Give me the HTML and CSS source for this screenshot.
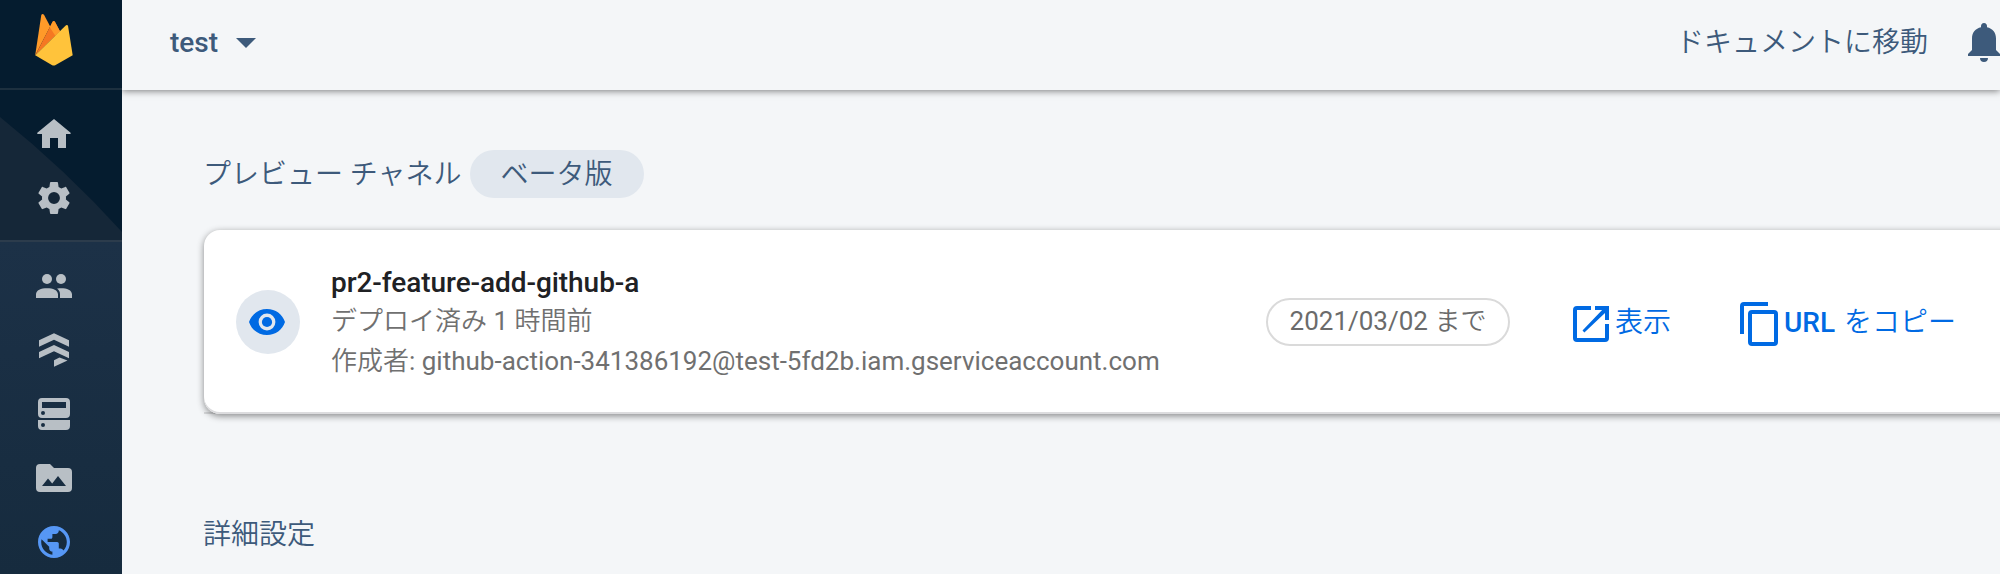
FILE: index.html
```html
<!DOCTYPE html>
<html lang="ja">
<head>
<meta charset="utf-8">
<title>test</title>
<link rel="stylesheet" href="styles.css">
</head>
<body>
<div class="app">
  <nav class="sidebar">
    <a class="brand">
      <svg width="38" height="52" viewBox="0 0 38 52">
        <path fill="#ff9a29" d="M.2 41.2 6.3 1.1Q7.2-.9 9 .8L15.2 12.500 0.300 41.200z"/>
        <path fill="#f57722" d="M.3 41.200 17.600 7.700Q18.700 6.200 19.900 7.700L25 17.200z"/>
        <path fill="#ff9a29" d="M14.800 13.200 17.600 7.700Q18.700 6.200 19.900 7.700L25 17.200 20.300 21.800z"/>
        <path fill="#ffc33b" d="M.2 41.300 31 11.300Q32.200 10.400 33 11.800L37.700 41.200 20.200 51.200Q18.700 52 17.200 51.200z"/>
      </svg>
    </a>
    <div class="nav-group nav-top">
      <svg class="top-shade" width="122" height="150" viewBox="0 0 122 150"><path d="M0 27Q66 80 122 142V150H0z"/></svg>
      <a class="nav-item"><svg width="40" height="40" viewBox="0 0 40 40"><path d="M20 5 3.300 18.800V20H8V34H16V24H24V34H32V20H36.600V18.800z"/></svg></a>
      <a class="nav-item"><svg width="40" height="40" viewBox="0.500 -0.500 25 25"><path transform="translate(1 0)" d="M19.430 12.980c.04-.32.07-.64.07-.98s-.03-.66-.07-.98l2.110-1.650c.19-.15.24-.42.12-.64l-2-3.460c-.12-.22-.39-.3-.61-.22l-2.490 1c-.52-.4-1.080-.73-1.690-.98l-.38-2.650C14.460 2.180 14.250 2 14 2h-4c-.25 0-.46.18-.49.42l-.38 2.650c-.61.25-1.170.59-1.690.98l-2.490-1c-.23-.09-.49 0-.61.22l-2 3.460c-.13.22-.07.49.12.64l2.110 1.650c-.04.32-.07.65-.07.98s.03.66.07.98l-2.110 1.650c-.19.15-.24.42-.12.64l2 3.460c.12.22.39.3.61.22l2.490-1c.52.4 1.080.73 1.690.98l.38 2.650c.03.24.24.42.49.42h4c.25 0 .46-.18.49-.42l.38-2.650c.61-.25 1.170-.59 1.690-.98l2.490 1c.23.09.49 0 .61-.22l2-3.460c.12-.22.07-.49-.12-.64l-2.110-1.650zM12 15.700A3.700 3.700 0 1 1 12 8.300A3.700 3.700 0 0 1 12 15.700z"/></svg></a>
    </div>
    <div class="nav-group nav-main">
      <a class="nav-item"><svg width="40" height="40" viewBox="0 0 40 40"><circle cx="13" cy="13" r="5"/><circle cx="27" cy="13" r="5"/><path d="M2 32V28.500C2 24 7 22.200 13 22.200S24 24 24 28.500V32zM23 22.600C24.500 22.200 25.500 22.200 27 22.200C33 22.200 38 24 38 28.500V32H26V28.500C26 26 25 24 23 22.600z"/></svg></a>
      <a class="nav-item"><svg width="40" height="40" viewBox="0 0 40 40"><path d="M20 3.300 35 10.300V16.700L20 9.700 5 16.700V10.300zM20 15 35 22V28.300L20 21.300 5 28.300V22zM20 30.200 25.500 27.500 33.500 30.600 20 36.700z"/></svg></a>
      <a class="nav-item"><svg width="40" height="40" viewBox="0 0 40 40"><path fill-rule="evenodd" d="M8 4H32Q36 4 36 8V20Q36 24 32 24H8Q4 24 4 20V8Q4 4 8 4zM8 8V14H32V8zM9 17A2 2 0 1 0 9 21A2 2 0 0 0 9 17zM4 26H36V32Q36 36 32 36H8Q4 36 4 32zM9 29A2 2 0 1 0 9 33A2 2 0 0 0 9 29z"/></svg></a>
      <a class="nav-item"><svg width="40" height="40" viewBox="0 0 40 40"><path fill-rule="evenodd" d="M6 6H16L20 10H34Q38 10 38 14V30Q38 34 34 34H6Q2 34 2 30V10Q2 6 6 6zM8 28H32L24 18 18.200 25.500 14 20.500z"/></svg></a>
      <a class="nav-item active"><svg width="40" height="40" viewBox="-0.500 -0.500 25 25"><path d="M12 2C6.480 2 2 6.480 2 12s4.480 10 10 10 10-4.480 10-10S17.520 2 12 2zm-1 17.930c-3.950-.49-7-3.850-7-7.930 0-.62.08-1.210.21-1.790L9 15v1c0 1.100.9 2 2 2v1.930zm6.900-2.540c-.26-.81-1-1.390-1.900-1.390h-1v-3c0-.55-.45-1-1-1H8v-2h2c.55 0 1-.45 1-1V7h2c1.100 0 2-.9 2-2v-.41c2.930 1.190 5 4.060 5 7.410 0 2.080-.8 3.970-2.100 5.390z"/></svg></a>
    </div>
  </nav>
  <div class="content">
    <header class="topbar">
      <div class="project"><span>test</span><svg width="20" height="10" viewBox="0 0 20 10"><path d="M0 0H20L10 10z"/></svg></div>
      <a class="docs-link">ドキュメントに移動</a>
      <svg class="bell" width="32" height="39" viewBox="0 0 32 39"><path d="M16 0C18 0 19 1.500 19 3V4.300C24.500 5.500 28 9.500 28 15.500V27L32 31V33H0V31L4 27V15.500C4 9.500 7.500 5.500 13 4.300V3C13 1.500 14 0 16 0zM12 35H20C20 37.500 18.500 39 16 39S12 37.500 12 35z"/></svg>
    </header>
    <main class="page">
      <div class="heading-row"><h2>プレビュー チャネル</h2><span class="beta">ベータ版</span></div>
      <div class="card-wrap">
        <section class="card">
          <div class="avatar"><svg width="36" height="26" viewBox="0 0 36 26"><path fill-rule="evenodd" d="M18 0C9.500 0 2.500 5.200 0 13C2.500 20.800 9.500 26 18 26S33.500 20.800 36 13C33.500 5.200 26.500 0 18 0zM18 4.600A8.400 8.400 0 1 1 18 21.400A8.400 8.400 0 0 1 18 4.600z"/><circle cx="18" cy="13" r="5.100"/></svg></div>
          <div class="details">
            <div class="channel">pr2-feature-add-github-a</div>
            <div class="meta">デプロイ済み<span class="latin"> 1 </span>時間前</div>
            <div class="meta author">作成者<span class="latin">: github-action-341386192@test-5fd2b.iam.gserviceaccount.com</span></div>
          </div>
          <span class="expiry"><span class="latin">2021/03/02 </span>まで</span>
          <a class="action view"><svg width="36" height="36" viewBox="0 0 36 36"><path d="M4 0H18V4H4V32H32V18H36V32Q36 36 32 36H4Q0 36 0 32V4Q0 0 4 0zM22 0H36V14H32V6.900L11.400 26.500 9.500 24.600 29.100 4H22z"/></svg><span>表示</span></a>
          <a class="action copy"><svg width="38" height="44" viewBox="0 0 38 44"><path fill-rule="evenodd" d="M4 0H28V4H4V32H0V4Q0 0 4 0zM12 8H34Q38 8 38 12V40Q38 44 34 44H12Q8 44 8 40V12Q8 8 12 8zM12 12V40H34V12z"/></svg><span><b>URL</b> をコピー</span></a>
        </section>
      </div>
      <h2 class="advanced">詳細設定</h2>
    </main>
  </div>
</div>
</body>
</html>
```
FILE: styles.css
```css
* { box-sizing: border-box; }
body { margin: 0; font-family: Roboto, "Noto Sans CJK JP", sans-serif; font-weight: 350; background: #f4f6f8; color: #3d5a7b; }
svg { display: block; flex: none; fill: currentColor; }
.app { display: flex; width: 2000px; height: 574px; overflow: hidden; }
.sidebar { flex: none; width: 122px; background: #051c2f; color: #b8bfc5; }
.brand { display: flex; height: 90px; padding: 14px 0 0 35px; border-bottom: 2px solid #1d303f; }
.nav-group { display: flex; flex-direction: column; }
.nav-top { position: relative; height: 152px; padding-top: 12px; border-bottom: 2px solid #2c3c4c; }
.top-shade { position: absolute; left: 0; top: 0; color: #152738; }
.nav-main { height: 332px; padding-top: 12px; background: linear-gradient(#1c3147, #162b3e); }
.nav-item { position: relative; display: flex; flex: none; align-items: center; height: 64px; padding-left: 34px; }
.active { color: #5697f5; }
.content { flex: none; width: 1878px; overflow: hidden; }
.topbar { display: flex; position: relative; height: 90px; padding-left: 48px; box-shadow: 0 1px 7px rgba(0,0,0,.5); }
.project { display: flex; align-items: center; gap: 18px; width: 1506px; height: 86px; font-size: 28px; font-weight: 500; }
.project span { margin-top: -2px; }
.docs-link { width: 292px; font-size: 28px; line-height: 85px; white-space: nowrap; }
.bell { margin-top: 23px; }
.page { padding: 60px 0 0 82px; }
.heading-row { display: flex; align-items: center; height: 48px; }
h2 { margin: 0 0 0 -1px; font-size: 28px; font-weight: 350; line-height: 50px; white-space: nowrap; }
.heading-row h2 { padding-top: 2px; }
.beta { height: 48px; margin-left: 8px; padding: 0 31px; border-radius: 24px; background: #e1e7ee; font-size: 28px; line-height: 50px; }
.card-wrap { width: 1900px; margin-top: 32px; border-bottom: 2px solid #d8dadc; }
.card { display: flex; height: 184px; margin-bottom: -2px; padding-left: 32px; border-radius: 16px; background: #fff; box-shadow: inset 0 -2px #dcdcde, 0 2px 7px rgba(0,0,0,.45); }
.avatar { display: flex; flex: none; align-items: center; justify-content: center; width: 64px; height: 64px; margin-top: 60px; padding-right: 2px; border-radius: 50%; background: #e1e7ee; color: #006ae3; }
.details { flex: none; width: 966px; padding: 34px 0 0 31px; white-space: nowrap; }
.channel { height: 38px; font-size: 28px; font-weight: 500; line-height: 38px; letter-spacing: -.06px; color: #202124; }
.meta { height: 40px; font-size: 26px; line-height: 38px; color: #707070; }
.author { line-height: 39px; }
.latin { font-weight: 400; white-space: pre; }
.expiry { flex: none; width: 244px; height: 48px; margin-top: 68px; border: 2px solid #dadada; border-radius: 24px; font-size: 26px; line-height: 43px; text-align: center; color: #6b6b6b; }
.action { display: flex; flex: none; align-items: center; height: 48px; margin-top: 70px; font-size: 28px; color: #006ae3; white-space: nowrap; }
.view { width: 167px; margin-left: 63px; }
.view span, .copy span { margin: -8px 0 0 6px; }
.copy b { margin-right: 2px; font-weight: 500; }
.advanced { margin-top: 96px; }
```
